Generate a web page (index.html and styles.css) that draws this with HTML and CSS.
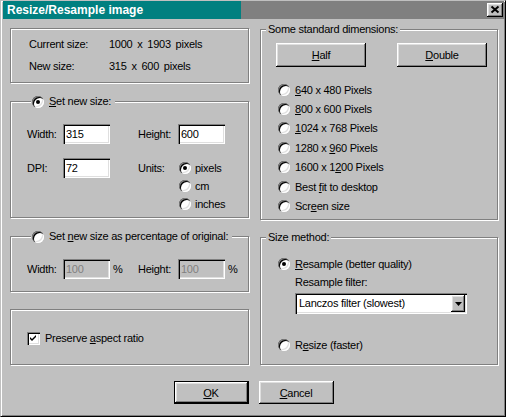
FILE: index.html
```
<!DOCTYPE html>
<html lang="en">
<head>
    <meta charset="UTF-8">
    <title>Resize/Resample image</title>
    <link rel="stylesheet" href="styles.css">
</head>
<body>
<div class="window">
    <div class="titlebar">
        <span class="title">Resize/Resample image</span>
        <span class="close-btn">
            <svg width="16" height="14" viewBox="0 0 16 14"><path d="M4.5 3.5 L11.5 9.5 M11.5 3.5 L4.5 9.5" stroke="#000" stroke-width="2" fill="none"/></svg>
        </span>
    </div>

    <div class="dialog">
        <div class="columns">
            <div class="column">
                <div class="group info">
                    <span>Current size:</span><span class="value">1000 x 1903 pixels</span>
                    <span>New size:</span><span class="value">315 x 600 pixels</span>
                </div>

                <div class="group group-size">
                    <div class="legend legend-radio"><span class="radio on"></span><span><u>S</u>et new size:</span></div>
                    <div class="fields">
                        <span class="lbl">Width:</span><span class="field">315</span><span></span>
                        <span class="lbl">Height:</span><span class="field">600</span><span></span>
                        <span class="lbl">DPI:</span><span class="field">72</span><span></span>
                        <span class="lbl">Units:</span>
                        <div class="units">
                            <div class="opt"><span class="radio on"></span><span>pixels</span></div>
                            <div class="opt"><span class="radio"></span><span>cm</span></div>
                            <div class="opt"><span class="radio"></span><span>inches</span></div>
                        </div>
                    </div>
                </div>

                <div class="group group-pct">
                    <div class="legend legend-radio"><span class="radio"></span><span>Set <u>n</u>ew size as percentage of original:</span></div>
                    <div class="fields">
                        <span class="lbl">Width:</span><span class="field disabled">100</span><span class="pct">%</span>
                        <span class="lbl">Height:</span><span class="field disabled">100</span><span class="pct">%</span>
                    </div>
                </div>

                <div class="group group-aspect">
                    <div class="check-row">
                        <span class="check"><svg width="13" height="13" viewBox="0 0 13 13"><path d="M3 5 L5 7 L9 3 L9 5 L5 9 L3 7 Z" fill="#000"/></svg></span>
                        <span>Preserve <u>a</u>spect ratio</span>
                    </div>
                </div>
            </div>

            <div class="column column-right">
                <div class="group group-std">
                    <div class="legend">Some standard dimensions:</div>
                    <div class="std-buttons">
                        <span class="btn btn-std"><u>H</u>alf</span>
                        <span class="btn btn-std"><u>D</u>ouble</span>
                    </div>
                    <div class="std-list">
                        <div class="opt"><span class="radio"></span><span><u>6</u>40 x 480 Pixels</span></div>
                        <div class="opt"><span class="radio"></span><span><u>8</u>00 x 600 Pixels</span></div>
                        <div class="opt"><span class="radio"></span><span><u>1</u>024 x 768 Pixels</span></div>
                        <div class="opt"><span class="radio"></span><span>1280 x <u>9</u>60 Pixels</span></div>
                        <div class="opt"><span class="radio"></span><span>1600 x 1<u>2</u>00 Pixels</span></div>
                        <div class="opt"><span class="radio"></span><span>Best <u>f</u>it to desktop</span></div>
                        <div class="opt"><span class="radio"></span><span>Scr<u>e</u>en size</span></div>
                    </div>
                </div>

                <div class="group group-method">
                    <div class="legend">Size method:</div>
                    <div class="opt method-opt"><span class="radio on"></span><span><u>R</u>esample (better quality)</span></div>
                    <div class="filter-label">Resample filter:</div>
                    <div class="combo">
                        <span class="combo-text">Lanczos filter (slowest)</span>
                        <span class="combo-btn"><svg width="7" height="4" viewBox="0 0 7 4"><path d="M0 0 H7 L3.5 4 Z" fill="#000"/></svg></span>
                    </div>
                    <div class="opt method-opt resize-opt"><span class="radio"></span><span>R<u>e</u>size (faster)</span></div>
                </div>
            </div>
        </div>

        <div class="actions">
            <span class="btn btn-action btn-default"><u>O</u>K</span>
            <span class="btn btn-action"><u>C</u>ancel</span>
        </div>
    </div>
</div>
</body>
</html>
```

FILE: styles.css
```
body {
    margin: 0;
    background: #c0c0c0;
    font-family: "Liberation Sans", Arial, sans-serif;
    font-size: 11px;
    letter-spacing: -0.25px;
    color: #000;
}

.window {
    box-sizing: border-box;
    width: 506px;
    height: 417px;
    background: #c0c0c0;
    border: 1px solid;
    border-color: #c0c0c0 #000 #000 #c0c0c0;
    box-shadow: inset 1px 1px #fff, inset -1px -1px #808080;
    padding: 0 1px 1px 2px;
}

/* title bar */
.titlebar {
    display: flex;
    align-items: center;
    height: 18px;
    padding-left: 4px;
    background: linear-gradient(to right, #008080 238px, #808080 238px);
    color: #fff;
    font-size: 12px;
    font-weight: bold;
    letter-spacing: 0;
}

.close-btn {
    display: block;
    width: 16px;
    height: 14px;
    margin-left: auto;
    margin-right: 1px;
    background: #c0c0c0;
    box-shadow: inset -1px -1px #000, inset 1px 1px #fff, inset -2px -2px #808080, inset 2px 2px #dfdfdf;
}

.close-btn svg {
    display: block;
}

/* dialog body */
.dialog {
    padding: 9px 0 0 7px;
}

.columns {
    display: grid;
    grid-template-columns: 239px 238px;
    column-gap: 11px;
}

.column-right {
    margin-top: 1px;
}

.group {
    box-sizing: border-box;
    border: 1px solid #808080;
    box-shadow: inset 1px 1px #fff, 1px 1px #fff;
}

.legend {
    display: flex;
    align-items: center;
    gap: 5px;
    width: max-content;
    height: 13px;
    line-height: 13px;
    margin: -7px 0 0 5px;
    padding: 0 2px;
    background: #c0c0c0;
}

.legend-radio {
    margin-left: 20px;
    padding: 0 4px 0 1px;
}

/* left column */
.info {
    height: 55px;
    display: grid;
    grid-template-columns: 80px auto;
    align-content: start;
    row-gap: 9px;
    line-height: 13px;
    padding: 9px 0 0 18px;
}

.value {
    word-spacing: 2px;
}

.group-size {
    height: 117px;
    margin-top: 18px;
}

.group-pct {
    height: 56px;
    margin-top: 18px;
}

.group-aspect {
    height: 56px;
    margin-top: 17px;
}

.fields {
    display: grid;
    grid-template-columns: 36px 47px 28px 40px 47px auto;
    align-items: start;
    row-gap: 14px;
    margin-top: 16px;
    padding-left: 16px;
}

.lbl,
.pct {
    line-height: 20px;
}

.pct {
    padding-left: 3px;
}

.field {
    box-sizing: border-box;
    height: 20px;
    line-height: 20px;
    padding-left: 3px;
    background: #fff;
    box-shadow: inset 1px 1px #808080, inset 2px 2px #000, inset -1px -1px #fff, inset -2px -2px #dfdfdf;
}

.field.disabled {
    background: #c0c0c0;
    color: #808080;
}

.units {
    grid-column: 5 / span 2;
    margin-top: 1px;
}

.units .opt {
    height: 18px;
    gap: 4px;
    padding-left: 1px;
}

.check-row {
    display: flex;
    align-items: center;
    gap: 5px;
    margin-top: 22px;
    padding-left: 16px;
    line-height: 13px;
}

.check {
    width: 13px;
    height: 13px;
    background: #fff;
    box-shadow: inset 1px 1px #808080, inset 2px 2px #000, inset -1px -1px #fff, inset -2px -2px #dfdfdf;
}

.check svg {
    display: block;
}

/* radio buttons */
.opt {
    display: flex;
    align-items: center;
    gap: 5px;
}

.radio {
    flex: none;
    display: grid;
    place-items: center;
    width: 12px;
    height: 12px;
    border-radius: 50%;
    background: #fff;
    box-shadow: inset 1px 1px #808080, inset 2px 2px #000, inset -1px -1px #fff, inset -2px -2px #dfdfdf;
}

.radio.on::after {
    content: "";
    width: 4px;
    height: 4px;
    border-radius: 50%;
    background: #000;
}

/* buttons */
.btn {
    box-sizing: border-box;
    display: flex;
    align-items: center;
    justify-content: center;
    background: #c0c0c0;
    box-shadow: inset -1px -1px #000, inset 1px 1px #fff, inset -2px -2px #808080, inset 2px 2px #dfdfdf;
}

/* right column */
.group-std {
    height: 191px;
}

.std-buttons {
    display: flex;
    gap: 31px;
    margin-top: 7px;
    padding-left: 15px;
}

.btn-std {
    width: 90px;
    height: 24px;
}

.std-list {
    margin-top: 13px;
    padding-left: 17px;
}

.std-list .opt {
    height: 19.4px;
}

.group-method {
    height: 128px;
    margin-top: 17px;
}

.method-opt {
    height: 19px;
    margin-top: 10px;
    padding-left: 17px;
}

.filter-label {
    height: 19px;
    line-height: 19px;
    padding-left: 34px;
}

.combo {
    box-sizing: border-box;
    display: flex;
    width: 172px;
    height: 21px;
    margin: 1px 0 0 34px;
    padding: 2px;
    background: #fff;
    box-shadow: inset 1px 1px #808080, inset 2px 2px #000, inset -1px -1px #fff, inset -2px -2px #dfdfdf;
}

.combo-text {
    flex: 1;
    padding-left: 2px;
    line-height: 17px;
}

.combo-btn {
    display: flex;
    align-items: center;
    justify-content: center;
    width: 14px;
    background: #c0c0c0;
    box-shadow: inset -1px -1px #000, inset 1px 1px #fff, inset -2px -2px #808080, inset 2px 2px #dfdfdf;
}

.combo-btn svg {
    display: block;
}

.resize-opt {
    margin-top: 21px;
}

/* bottom buttons */
.actions {
    display: flex;
    justify-content: center;
    gap: 10px;
    margin-top: 16px;
    padding-right: 7px;
}

.btn-action {
    width: 75px;
    height: 23px;
}

.btn-default {
    border: 1px solid #000;
}
```
